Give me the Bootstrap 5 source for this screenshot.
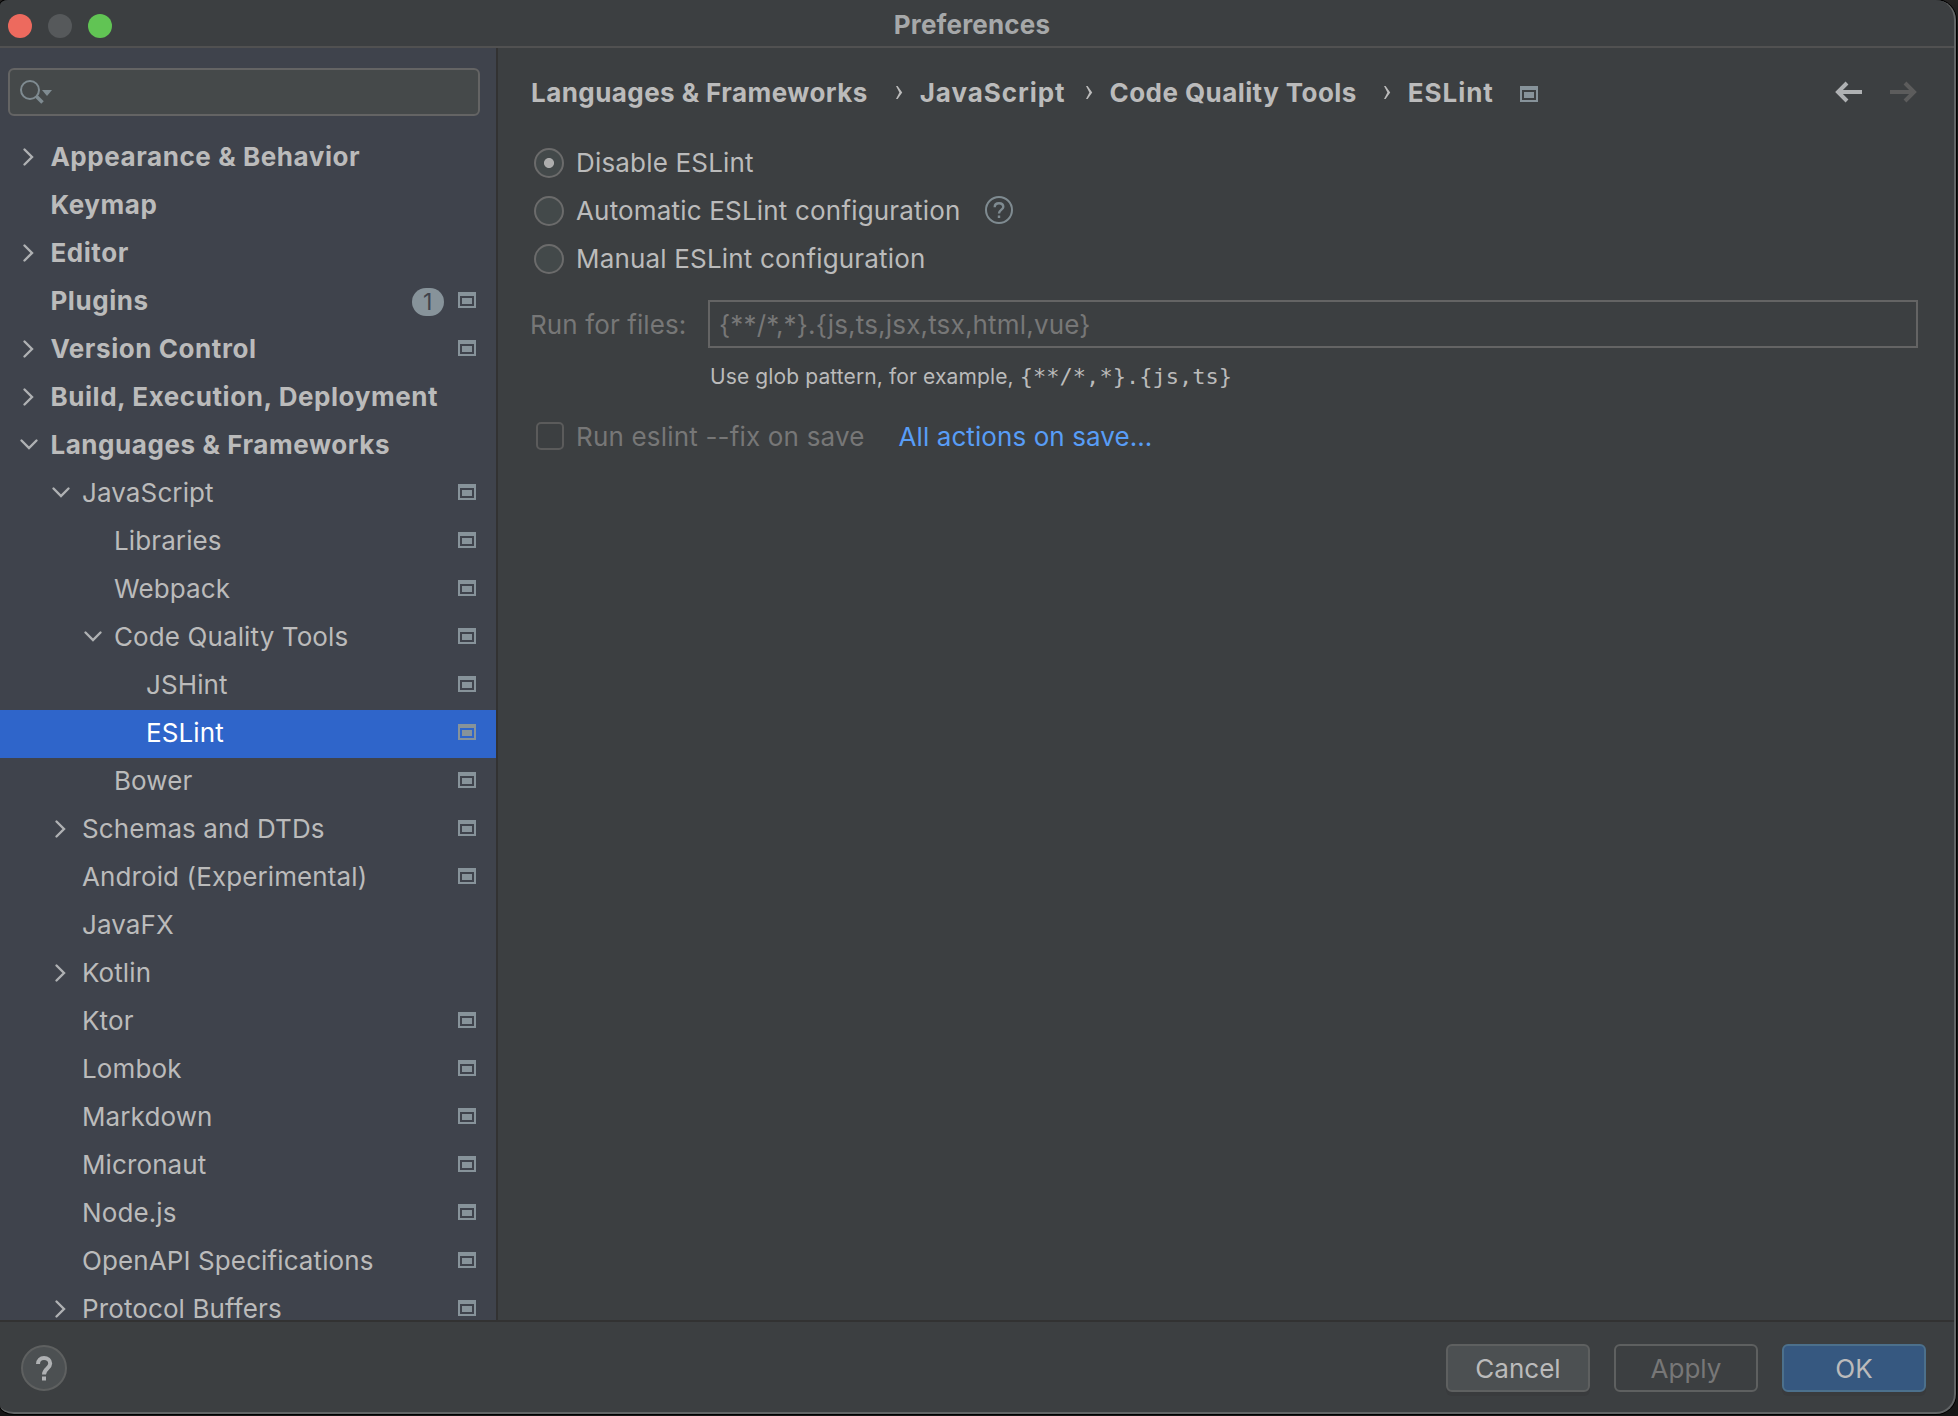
<!DOCTYPE html>
<html lang="en" data-bs-theme="dark">
<head>
<meta charset="utf-8">
<meta name="viewport" content="width=device-width, initial-scale=1">
<title>Preferences</title>
<link href="https://cdn.jsdelivr.net/npm/bootstrap@5.3.0/dist/css/bootstrap.min.css" rel="stylesheet">
<style>
  body { background: #161616; font-family: Inter, "Noto Sans", sans-serif; font-size: 26px; line-height: 48px; letter-spacing: .11px; color: #bbb; overflow: hidden; }
  .backdrop { width: 1958px; height: 1416px; padding: 0 2px 2px 0; background: linear-gradient(#262423, #161616 30px); }
  .window { width: 1956px; height: 1414px; background: #3c3f41; border: solid #626566; border-width: 0 2px 2px 0; border-radius: 8px 20px 20px 14px / 5px 20px 20px 9px; overflow: hidden; box-shadow: 0 0 0 1px #000; }
  .titlebar { height: 48px; border-bottom: 2px solid #515151; line-height: 50px; padding-left: 8px; flex: none; }
  .titlebar .caption { color: #a6a8a9; letter-spacing: .17px; padding-right: 122px; }
  .lights { padding-top: 14px; }
  .light { width: 24px; height: 24px; border-radius: 50%; }
  .light-close { background: #ed6a5e; } .light-min { background: #56595b; } .light-zoom { background: #61c454; }
  .sidebar { width: 498px; background: #3f434c; border-right: 2px solid #323232; flex: none; }
  .search { height: 48px; margin: 20px 16px 18px 8px; border: 2px solid #646464; border-radius: 6px; background: #45494a; }
  .tree { overflow: hidden; }
  .node { height: 48px; padding: 0 20px 0 18px; flex: none; line-height: 46px; }
  .node svg { flex: none; }
  .node .twisty { width: 22px; height: 48px; margin-right: 10px; flex: none; }
  .lvl-1 { padding-left: 50px; } .lvl-2 { padding-left: 82px; } .lvl-3 { padding-left: 114px; }
  .lvl-0 { padding-left: 18.400px; font-weight: 700; letter-spacing: .57px; }
  .node.selected { background: #2f65ca; color: #fff; }
  .proj { width: 18px; height: 16px; fill: #87939a; }
  .node .proj { margin-top: 14px; }
  .count { width: 32px; height: 28px; border-radius: 14px; background: #87939a; color: #3f434c; font-size: 23px; font-weight: 400; line-height: 28px; margin: 10px 14px 0 0; }
  .content { padding-left: 33px; padding-right: 36px; }
  .crumbs { height: 91px; font-weight: 700; letter-spacing: .43px; padding-bottom: 2px; }
  .crumbs .wide { letter-spacing: .95px; }
  .dot-radio { width: 30px; height: 30px; border: 2px solid #6b6b6b; border-radius: 50%; background: #43494a; margin: 2px 12px 0 3px; }
  .dot-radio.on { background: radial-gradient(circle, #adadad 4.6px, #43494a 5.4px); }
  .opt { height: 48px; line-height: 47px; padding-bottom: 2px; letter-spacing: .18px; }
  .dim { color: #777; }
  .files { margin-top: 17px; }
  .files label { width: 178px; line-height: 49px; margin-left: -1px; }
  .files .pattern { height: 48px; border: 2px solid #646464; padding-left: 9px; line-height: 46px; letter-spacing: .18px; }
  .hint { margin: 12px 0 20px 179px; height: 32px; line-height: 32px; font-size: 21px; letter-spacing: .12px; }
  .hint code { font: 22px/32px "DejaVu Sans Mono", monospace; color: #bbb; letter-spacing: .03px; margin-left: 6px; }
  .tick { width: 28px; height: 28px; border: 2px solid #5b5b5b; border-radius: 5px; margin: 0 12px 0 5px; }
  .action-link { color: #589df6; margin-left: 34px; letter-spacing: .08px; }
  .footer-bar { height: 92px; border-top: 2px solid #323232; padding: 2px 28px 0 21px; flex: none; }
  .push { width: 144px; height: 48px; padding: 0; border: 2px solid #5e6060; border-radius: 6px; font-size: 26px; line-height: 45px; letter-spacing: 0; color: #bbb; margin-left: 24px; margin-bottom: 1px; }
  .push-cancel { background: #4c5052; box-shadow: 0 4px 0 #393b3d; }
  .push-apply { color: #777; }
  .push-ok { background: #365880; border-color: #4c708c; box-shadow: 0 4px 0 #393b3d; }
  .line { fill: none; stroke-linecap: round; stroke-linejoin: miter; }
</style>
</head>
<body>
<svg class="d-none">
  <symbol id="proj" viewBox="0 0 18 16"><path fill-rule="evenodd" d="M0 0H18V16H0ZM2 4V14H16V4ZM4 6H14V12H4Z"/></symbol>
  <symbol id="right" viewBox="0 0 22 48"><path class="line" stroke="#afb1b3" stroke-width="2.4" d="M6.500 15.500L14 23L6.500 30.500"/></symbol>
  <symbol id="down" viewBox="0 0 22 48"><path class="line" stroke="#afb1b3" stroke-width="2.400" d="M3.500 18.500L11 26L18.500 18.500"/></symbol>
  <symbol id="sep" viewBox="0 0 8 14"><path fill="#bbb" d="M1 0L2.600 0L7.200 6.500L2.600 13H1L4.400 6.500Z"/></symbol>
</svg>
<div class="backdrop">
<div class="window d-flex flex-column">
  <header class="titlebar d-flex">
    <div class="lights d-flex gap-3 align-items-start">
      <span class="light light-close"></span><span class="light light-min"></span><span class="light light-zoom"></span>
    </div>
    <div class="caption flex-grow-1 text-center fw-bold">Preferences</div>
  </header>
  <div class="d-flex flex-grow-1 overflow-hidden">
    <aside class="sidebar d-flex flex-column">
      <div class="search">
        <svg class="d-block" width="50" height="44"><circle cx="20" cy="20" r="9" fill="none" stroke="#7f8b91" stroke-width="2"/><path d="M26.500 26.500L32.500 32.500" stroke="#7f8b91" stroke-width="3.500"/><path d="M32 20H42L37 26Z" fill="#7f8b91"/></svg>
      </div>
      <nav class="tree d-flex flex-column flex-grow-1">
        <div class="node lvl-0 d-flex"><svg class="twisty"><use href="#right"/></svg><span class="flex-grow-1">Appearance &amp; Behavior</span></div>
        <div class="node lvl-0 d-flex"><span class="twisty"></span><span class="flex-grow-1">Keymap</span></div>
        <div class="node lvl-0 d-flex"><svg class="twisty"><use href="#right"/></svg><span class="flex-grow-1">Editor</span></div>
        <div class="node lvl-0 d-flex"><span class="twisty"></span><span class="flex-grow-1">Plugins</span><span class="count text-center">1</span><svg class="proj"><use href="#proj"/></svg></div>
        <div class="node lvl-0 d-flex"><svg class="twisty"><use href="#right"/></svg><span class="flex-grow-1">Version Control</span><svg class="proj"><use href="#proj"/></svg></div>
        <div class="node lvl-0 d-flex"><svg class="twisty"><use href="#right"/></svg><span class="flex-grow-1 text-nowrap">Build, Execution, Deployment</span></div>
        <div class="node lvl-0 d-flex"><svg class="twisty"><use href="#down"/></svg><span class="flex-grow-1">Languages &amp; Frameworks</span></div>
        <div class="node lvl-1 d-flex"><svg class="twisty"><use href="#down"/></svg><span class="flex-grow-1">JavaScript</span><svg class="proj"><use href="#proj"/></svg></div>
        <div class="node lvl-2 d-flex"><span class="twisty"></span><span class="flex-grow-1">Libraries</span><svg class="proj"><use href="#proj"/></svg></div>
        <div class="node lvl-2 d-flex"><span class="twisty"></span><span class="flex-grow-1">Webpack</span><svg class="proj"><use href="#proj"/></svg></div>
        <div class="node lvl-2 d-flex"><svg class="twisty"><use href="#down"/></svg><span class="flex-grow-1">Code Quality Tools</span><svg class="proj"><use href="#proj"/></svg></div>
        <div class="node lvl-3 d-flex"><span class="twisty"></span><span class="flex-grow-1">JSHint</span><svg class="proj"><use href="#proj"/></svg></div>
        <div class="node lvl-3 d-flex selected"><span class="twisty"></span><span class="flex-grow-1">ESLint</span><svg class="proj"><use href="#proj"/></svg></div>
        <div class="node lvl-2 d-flex"><span class="twisty"></span><span class="flex-grow-1">Bower</span><svg class="proj"><use href="#proj"/></svg></div>
        <div class="node lvl-1 d-flex"><svg class="twisty"><use href="#right"/></svg><span class="flex-grow-1">Schemas and DTDs</span><svg class="proj"><use href="#proj"/></svg></div>
        <div class="node lvl-1 d-flex"><span class="twisty"></span><span class="flex-grow-1">Android (Experimental)</span><svg class="proj"><use href="#proj"/></svg></div>
        <div class="node lvl-1 d-flex"><span class="twisty"></span><span class="flex-grow-1">JavaFX</span></div>
        <div class="node lvl-1 d-flex"><svg class="twisty"><use href="#right"/></svg><span class="flex-grow-1">Kotlin</span></div>
        <div class="node lvl-1 d-flex"><span class="twisty"></span><span class="flex-grow-1">Ktor</span><svg class="proj"><use href="#proj"/></svg></div>
        <div class="node lvl-1 d-flex"><span class="twisty"></span><span class="flex-grow-1">Lombok</span><svg class="proj"><use href="#proj"/></svg></div>
        <div class="node lvl-1 d-flex"><span class="twisty"></span><span class="flex-grow-1">Markdown</span><svg class="proj"><use href="#proj"/></svg></div>
        <div class="node lvl-1 d-flex"><span class="twisty"></span><span class="flex-grow-1">Micronaut</span><svg class="proj"><use href="#proj"/></svg></div>
        <div class="node lvl-1 d-flex"><span class="twisty"></span><span class="flex-grow-1">Node.js</span><svg class="proj"><use href="#proj"/></svg></div>
        <div class="node lvl-1 d-flex"><span class="twisty"></span><span class="flex-grow-1">OpenAPI Specifications</span><svg class="proj"><use href="#proj"/></svg></div>
        <div class="node lvl-1 d-flex"><svg class="twisty"><use href="#right"/></svg><span class="flex-grow-1">Protocol Buffers</span><svg class="proj"><use href="#proj"/></svg></div>
      </nav>
    </aside>
    <main class="content flex-grow-1">
      <div class="crumbs d-flex align-items-center">
        <span>Languages &amp; Frameworks</span>
        <svg width="8" height="14" style="margin:0 17px 0 27px"><use href="#sep"/></svg>
        <span class="wide">JavaScript</span>
        <svg width="8" height="14" style="margin:0 17px 0 19px"><use href="#sep"/></svg>
        <span>Code Quality Tools</span>
        <svg width="8" height="14" style="margin:0 17px 0 26px"><use href="#sep"/></svg>
        <span class="wide">ESLint</span>
        <svg class="proj" style="margin:3px 0 0 26px"><use href="#proj"/></svg>
        <svg class="ms-auto" style="margin-top:-2px" width="84" height="24" fill="none" stroke-width="4"><path stroke="#afb1b3" d="M28 12H5M13 3L4 12L13 21"/><path stroke="#5c5c5c" d="M56 12H79M71 3L80 12L71 21"/></svg>
      </div>
      <div class="opt d-flex align-items-center"><span class="dot-radio on"></span>Disable ESLint</div>
      <div class="opt d-flex align-items-center"><span class="dot-radio"></span>Automatic ESLint configuration
        <svg class="line" style="margin:0 0 0 24px" width="28" height="28" stroke="#7f8b91" stroke-width="2"><circle cx="14" cy="14" r="13"/><path stroke-width="2.400" stroke-linecap="butt" d="M9.700 11.200C9.700 8.700 11.500 7.300 14 7.300S18.300 8.700 18.300 11C18.300 13.700 14 13.700 14 17.600M14 19.400V22"/></svg></div>
      <div class="opt d-flex align-items-center"><span class="dot-radio"></span>Manual ESLint configuration</div>
      <div class="files d-flex dim"><label>Run for files:</label><div class="pattern flex-grow-1">{**/*,*}.{js,ts,jsx,tsx,html,vue}</div></div>
      <div class="hint d-flex"><span>Use glob pattern, for example,</span><code>{**/*,*}.{js,ts}</code></div>
      <div class="opt d-flex align-items-center dim"><span class="tick"></span>Run eslint --fix on save<a class="action-link text-decoration-none" href="#">All actions on save...</a></div>
    </main>
  </div>
  <footer class="footer-bar d-flex align-items-center">
    <svg width="46" height="46" class="me-auto"><circle cx="23" cy="23" r="22" fill="#4c5052" stroke="#5e6060" stroke-width="2"/><path fill="none" stroke="#afb1b3" stroke-width="4" d="M17 19C17 15.200 19.500 13 23 13S29.200 15.200 29.200 18.500C29.200 23.500 23 23.500 23 29.500M23 31.500V35.500"/></svg>
    <button class="btn push push-cancel">Cancel</button>
    <button class="btn push push-apply">Apply</button>
    <button class="btn push push-ok">OK</button>
  </footer>
</div>
</div>
<script src="https://cdn.jsdelivr.net/npm/bootstrap@5.3.0/dist/js/bootstrap.bundle.min.js"></script>
</body>
</html>
